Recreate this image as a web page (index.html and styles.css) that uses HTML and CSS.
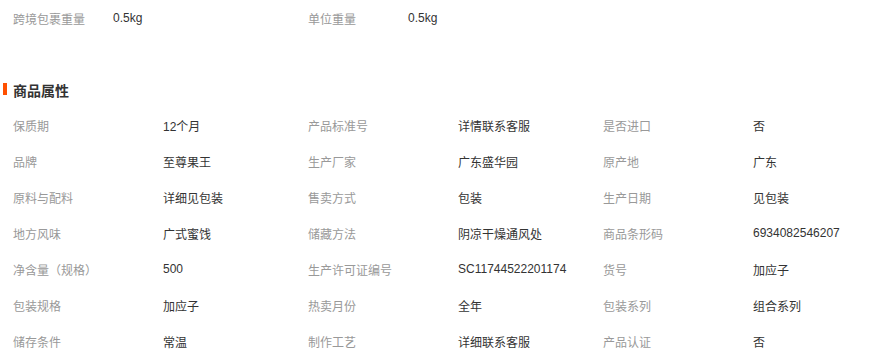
FILE: index.html
```html
<!DOCTYPE html>
<html lang="zh-CN">
<head>
<meta charset="utf-8">
<title>商品属性</title>
<link rel="stylesheet" href="styles.css">
</head>
<body>
<div class="page">
  <div class="top-attrs">
    <span class="lbl">跨境包裹重量</span><span class="val">0.5kg</span>
    <span class="lbl">单位重量</span><span class="val">0.5kg</span>
  </div>

  <h3 class="section-title">商品属性</h3>

  <div class="attr-grid">
    <span class="lbl">保质期</span><span class="val">12个月</span>
    <span class="lbl">产品标准号</span><span class="val">详情联系客服</span>
    <span class="lbl">是否进口</span><span class="val">否</span>

    <span class="lbl">品牌</span><span class="val">至尊果王</span>
    <span class="lbl">生产厂家</span><span class="val">广东盛华园</span>
    <span class="lbl">原产地</span><span class="val">广东</span>

    <span class="lbl">原料与配料</span><span class="val">详细见包装</span>
    <span class="lbl">售卖方式</span><span class="val">包装</span>
    <span class="lbl">生产日期</span><span class="val">见包装</span>

    <span class="lbl">地方风味</span><span class="val">广式蜜饯</span>
    <span class="lbl">储藏方法</span><span class="val">阴凉干燥通风处</span>
    <span class="lbl">商品条形码</span><span class="val">6934082546207</span>

    <span class="lbl">净含量（规格）</span><span class="val">500</span>
    <span class="lbl">生产许可证编号</span><span class="val">SC11744522201174</span>
    <span class="lbl">货号</span><span class="val">加应子</span>

    <span class="lbl">包装规格</span><span class="val">加应子</span>
    <span class="lbl">热卖月份</span><span class="val">全年</span>
    <span class="lbl">包装系列</span><span class="val">组合系列</span>

    <span class="lbl">储存条件</span><span class="val">常温</span>
    <span class="lbl">制作工艺</span><span class="val">详细联系客服</span>
    <span class="lbl">产品认证</span><span class="val">否</span>
  </div>
</div>
</body>
</html>
```

FILE: styles.css
```css
html, body {
  margin: 0;
  padding: 0;
  background: #ffffff;
}

body {
  font-family: "Liberation Sans", "Noto Sans CJK SC", sans-serif;
  font-size: 12px;
  color: #333333;
}

.page {
  width: 877px;
}

.lbl {
  color: #999999;
  white-space: nowrap;
}

.val {
  color: #333333;
  white-space: nowrap;
}

.top-attrs {
  display: grid;
  grid-template-columns: 100px 195px 100px 1fr;
  grid-auto-rows: 36px;
  align-items: center;
  padding: 0 0 0 13px;
}

.section-title {
  display: flex;
  align-items: center;
  margin: 39px 0 2px 0;
  height: 30px;
  padding-left: 3px;
  font-size: 14px;
  font-weight: bold;
  color: #333333;
}

.section-title::before {
  content: "";
  width: 4px;
  height: 12px;
  margin-right: 6px;
  margin-top: -2px;
  background: #ff5000;
}

.attr-grid {
  display: grid;
  grid-template-columns: 150px 145px 150px 145px 150px 1fr;
  grid-auto-rows: 36px;
  align-items: center;
  padding-left: 13px;
}
```
